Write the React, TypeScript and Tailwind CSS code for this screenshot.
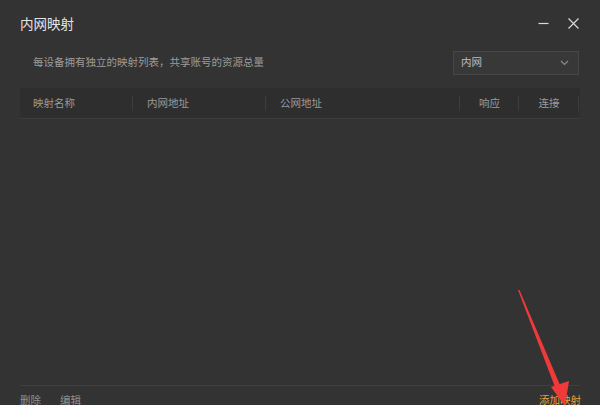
import React from "react";

const columns = [
  { label: "映射名称", w: "w-[113px]", align: "pl-[13px]" },
  { label: "内网地址", w: "w-[133px]", align: "pl-[14px]" },
  { label: "公网地址", w: "w-[194px]", align: "pl-[14px]" },
  { label: "响应", w: "w-[59px]", align: "justify-center" },
  { label: "连接", w: "w-[60px]", align: "justify-center" },
];

function ChevronDown() {
  return (
    <svg width="9" height="6" viewBox="0 0 9 6" fill="none">
      <path d="M1 1l3.5 3.5L8 1" stroke="#8a8a8a" strokeWidth="1.2" />
    </svg>
  );
}

export default function App() {
  return (
    <div
      className="relative w-[600px] h-[405px] overflow-hidden bg-[#333333] flex flex-col"
      style={{ fontFamily: '"Noto Sans CJK SC", "Noto Sans", sans-serif' }}
    >
      {/* title bar */}
      <div className="flex items-center justify-between h-[47px] pl-5 pr-[21px]">
        <span className="text-[13.5px] text-[#e4e4e4] leading-none">内网映射</span>
        <div className="flex items-center gap-[19px]">
          <svg width="11" height="11" viewBox="0 0 11 11">
            <path d="M0.5 5.5h10" stroke="#d8d8d8" strokeWidth="1.2" />
          </svg>
          <svg width="11" height="11" viewBox="0 0 11 11">
            <path d="M0.5 0.5l10 10M10.5 0.5l-10 10" stroke="#d8d8d8" strokeWidth="1.2" />
          </svg>
        </div>
      </div>

      {/* toolbar */}
      <div className="flex items-center justify-between pl-[33px] pr-[21px] h-[31px]">
        <span className="text-[10.5px] text-[#9c9c9c] leading-none">
          每设备拥有独立的映射列表，共享账号的资源总量
        </span>
        <div className="flex items-center justify-between w-[126px] h-[24px] border border-[#474747] bg-[#383838] pl-[7px] pr-[9px]">
          <span className="text-[10.5px] text-[#bdbdbd] leading-none">内网</span>
          <ChevronDown />
        </div>
      </div>

      {/* table */}
      <div className="mx-5 mt-[10px] flex h-[31px] bg-[#2e2e2e] border-b border-[#3c3c3c]">
        {columns.map((c) => (
          <div
            key={c.label}
            className={`${c.w} ${c.align} relative flex items-center text-[10.5px] text-[#9a9a9a]`}
          >
            {c.label}
            <span className="absolute right-0 top-[8px] h-[15px] w-px bg-[#3d3d3d]" />
          </div>
        ))}
      </div>

      <div className="flex-1" />

      <div className="mx-5 border-t border-[#3f3f3f]" />

      {/* footer */}
      <div className="flex items-start justify-between pl-5 pr-[19px] h-[19px] pt-[9px]">
        <div className="flex gap-[19px] text-[10.5px] text-[#8f8f8f] leading-none">
          <span>删除</span>
          <span>编辑</span>
        </div>
        <span className="text-[10.5px] text-[#e6a23c] leading-none">添加映射</span>
      </div>

      {/* annotation arrow */}
      <svg className="absolute left-0 top-0" width="600" height="405" viewBox="0 0 600 405">
        <polygon points="518,290 519.5,290 560,385 555,387" fill="#f03a3a" />
        <polygon points="551,387 569,381 565,406" fill="#f03a3a" />
      </svg>
    </div>
  );
}
